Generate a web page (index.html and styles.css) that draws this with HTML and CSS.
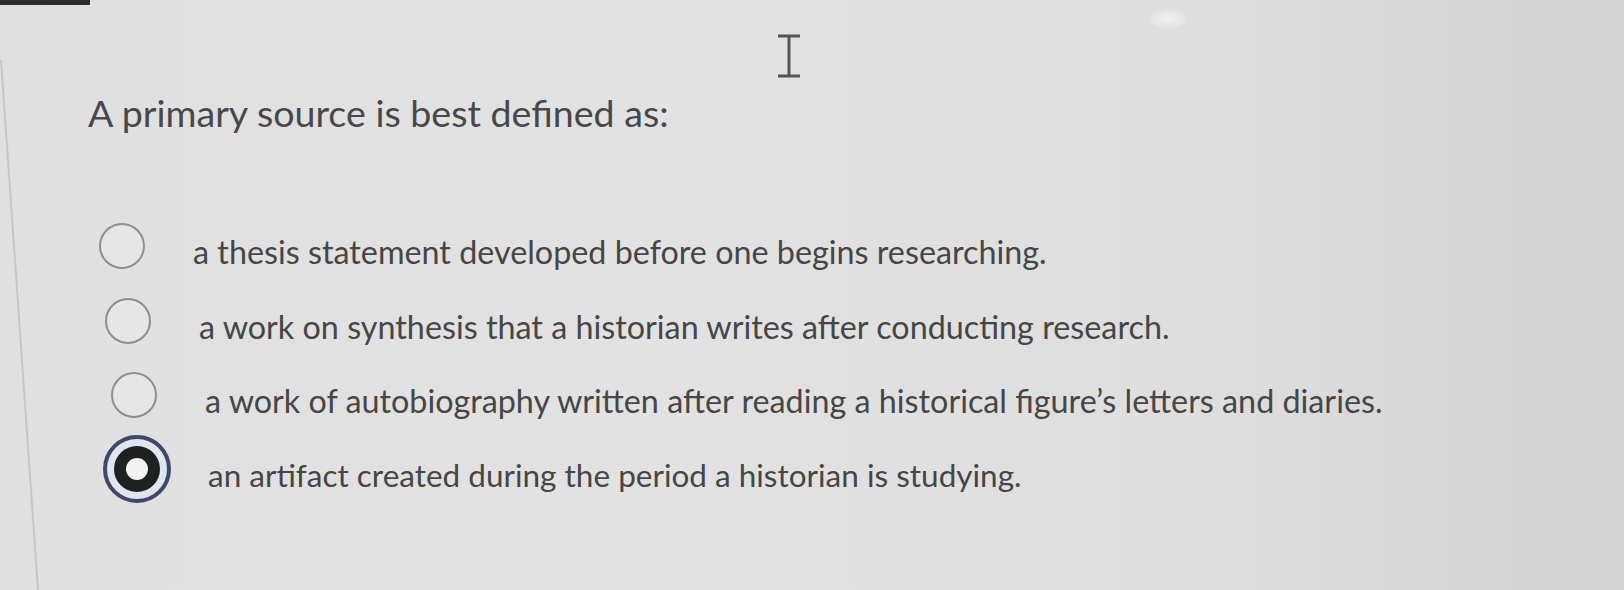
FILE: index.html
```html
<!DOCTYPE html>
<html lang="en">
<head>
<meta charset="utf-8">
<title>Quiz question</title>
<link rel="stylesheet" href="styles.css">
</head>
<body>
<div class="screen">
  <div class="topbar"></div>
  <svg class="bezel" width="60" height="590" viewBox="0 0 60 590"><line x1="1" y1="60" x2="38" y2="590" stroke="#c6c6c6" stroke-width="2"/></svg>
  <svg class="ibeam" width="26" height="46" viewBox="0 0 26 46"><path d="M1 2h22M12 2v40M1 42h22" stroke="#555" stroke-width="3" fill="none"/></svg>
  <div class="glare"></div>
  <main class="question">
    <h1 class="prompt">A primary source is best defined as:</h1>
    <ul class="options">
      <li class="option"><span class="radio-cell"><span class="radio"></span></span><span class="label">a thesis statement developed before one begins researching.</span></li>
      <li class="option"><span class="radio-cell"><span class="radio"></span></span><span class="label">a work on synthesis that a historian writes after conducting research.</span></li>
      <li class="option"><span class="radio-cell"><span class="radio"></span></span><span class="label">a work of autobiography written after reading a historical figure’s letters and diaries.</span></li>
      <li class="option"><span class="radio-cell"><span class="radio selected"></span></span><span class="label">an artifact created during the period a historian is studying.</span></li>
    </ul>
  </main>
</div>
</body>
</html>
```

FILE: styles.css
```css
html, body {
  margin: 0;
  padding: 0;
}
body {
  width: 1624px;
  height: 590px;
  overflow: hidden;
  font-family: Lato, "Open Sans", sans-serif;
}
.screen {
  position: relative;
  width: 1624px;
  height: 590px;
  background: linear-gradient(90deg, #e0e0e0 0%, #e2e2e2 40%, #dedede 75%, #d2d2d2 100%);
  overflow: hidden;
}
.topbar {
  position: absolute;
  left: 0;
  top: 0;
  width: 90px;
  height: 5px;
  background: #2e2e2e;
}
.bezel {
  position: absolute;
  left: 0;
  top: 0;
}
.ibeam {
  position: absolute;
  left: 777px;
  top: 34px;
}
.glare {
  position: absolute;
  left: 1150px;
  top: 9px;
  width: 36px;
  height: 20px;
  border-radius: 50%;
  background: radial-gradient(ellipse at center, #f0f0ec 0%, rgba(236,236,232,0.5) 55%, rgba(230,230,230,0) 100%);
}
.question {
  padding-top: 90px;
}
.prompt {
  margin: 0 0 0 88px;
  font-size: 37.6px;
  line-height: 46px;
  font-weight: 400;
  color: #484848;
}
.options {
  list-style: none;
  margin: 72px 0 0 0;
  padding: 0;
}
.option {
  display: flex;
  align-items: center;
  height: 75px;
  gap: 36px;
}
.option:nth-child(1) { margin-left: 87px; }
.option:nth-child(2) { margin-left: 93px; }
.option:nth-child(3) { margin-left: 99px; height: 73px; }
.option:nth-child(4) { margin-left: 102px; }
.option:nth-child(4) .label { font-size: 31.5px; }
.radio-cell {
  width: 70px;
  display: flex;
  justify-content: center;
  align-items: center;
}
.radio {
  box-sizing: border-box;
  width: 46px;
  height: 46px;
  border-radius: 50%;
  border: 2px solid #8e8e8e;
  background: #e6e6e6;
}
.radio.selected {
  width: 68px;
  height: 68px;
  border: 4px solid #3f4866;
  background: #dfe6f0;
  display: flex;
  align-items: center;
  justify-content: center;
}
.radio.selected::after {
  content: "";
  box-sizing: border-box;
  width: 46px;
  height: 46px;
  border-radius: 50%;
  border: 12px solid #1d2220;
  background: #f2f2f2;
}
.label {
  font-size: 32.3px;
  line-height: 38px;
  padding-top: 12px;
  color: #464646;
  white-space: nowrap;
}
```
